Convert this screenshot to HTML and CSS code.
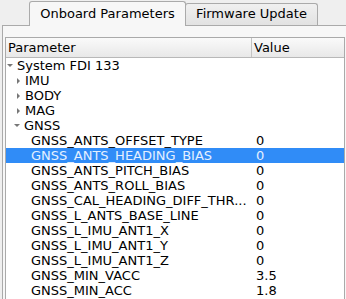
FILE: index.html
```html
<!DOCTYPE html>
<html lang="en">
<head>
    <meta charset="UTF-8">
    <title>Parameters</title>
    <link rel="stylesheet" href="styles.css">
</head>
<body>
    <div class="tabs">
        <div class="tab active">Onboard Parameters</div>
        <div class="tab">Firmware Update</div>
    </div>
    <div class="panel">
        <div class="tree">
            <div class="head">
                <div class="name">Parameter</div>
                <div class="value">Value</div>
            </div>
            <div class="row"><div class="name l0"><span class="arr open"></span>System FDI 133</div><div class="value"></div></div>
            <div class="row"><div class="name l1"><span class="arr"></span>IMU</div><div class="value"></div></div>
            <div class="row"><div class="name l1"><span class="arr"></span>BODY</div><div class="value"></div></div>
            <div class="row"><div class="name l1"><span class="arr"></span>MAG</div><div class="value"></div></div>
            <div class="row"><div class="name l1"><span class="arr open"></span>GNSS</div><div class="value"></div></div>
            <div class="row"><div class="name l2">GNSS_ANTS_OFFSET_TYPE</div><div class="value">0</div></div>
            <div class="row sel"><div class="name l2">GNSS_ANTS_HEADING_BIAS</div><div class="value">0</div></div>
            <div class="row"><div class="name l2">GNSS_ANTS_PITCH_BIAS</div><div class="value">0</div></div>
            <div class="row"><div class="name l2">GNSS_ANTS_ROLL_BIAS</div><div class="value">0</div></div>
            <div class="row"><div class="name l2">GNSS_CAL_HEADING_DIFF_THR...</div><div class="value">0</div></div>
            <div class="row"><div class="name l2">GNSS_L_ANTS_BASE_LINE</div><div class="value">0</div></div>
            <div class="row"><div class="name l2">GNSS_L_IMU_ANT1_X</div><div class="value">0</div></div>
            <div class="row"><div class="name l2">GNSS_L_IMU_ANT1_Y</div><div class="value">0</div></div>
            <div class="row"><div class="name l2">GNSS_L_IMU_ANT1_Z</div><div class="value">0</div></div>
            <div class="row"><div class="name l2">GNSS_MIN_VACC</div><div class="value">3.5</div></div>
            <div class="row"><div class="name l2">GNSS_MIN_ACC</div><div class="value">1.8</div></div>
        </div>
    </div>
</body>
</html>
```

FILE: styles.css
```css
html,body{
    margin: 0;
    padding: 0;
}
body{
    background: #efefef;
    font-family: "DejaVu Sans", sans-serif;
    font-size: 13px;
    color: #000;
    overflow: hidden;
    height: 299px;
}
.tabs{
    display: flex;
    align-items: flex-end;
    padding-left: 29px;
    height: 25px;
}
.tab{
    box-sizing: border-box;
    height: 22px;
    border: 1px solid #aaa;
    border-bottom: none;
    border-radius: 3px 3px 0 0;
    background: linear-gradient(#f0f0f0, #e2e2e2);
    padding: 2px 0 0 0;
    width: 133px;
    text-align: center;
    white-space: nowrap;
}
.tab.active{
    height: 25px;
    width: 157px;
    background: #f7f7f7;
    padding-top: 4px;
    margin-right: -1px;
    margin-bottom: -1px;
    position: relative;
    z-index: 1;
}
.panel{
    margin-left: 2px;
    border: 1px solid #aaa;
    border-right: none;
    background: #f7f7f7;
    height: 400px;
    padding: 11px 0 0 2px;
}
.tree{
    width: 338px;
    border: 1px solid #aaa;
    background: #fff;
    height: 400px;
}
.head{
    display: flex;
    height: 19px;
    line-height: 19px;
    background: linear-gradient(#fafafa, #e8e8e8);
    border-bottom: 1px solid #b8b8b8;
}
.head .name{
    width: 246px;
    padding-left: 2px;
    border-right: 1px solid #c4c4c4;
    box-sizing: border-box;
}
.head .value{
    padding-left: 2px;
}
.row{
    display: flex;
    height: 15px;
    line-height: 15px;
}
.row .name{
    width: 246px;
    box-sizing: border-box;
    white-space: nowrap;
    overflow: hidden;
}
.row .value{
    padding-left: 4px;
}
.l0{
    padding-left: 1px;
}
.l1{
    padding-left: 8px;
}
.l2{
    padding-left: 25px;
}
.arr{
    display: inline-block;
    width: 0;
    height: 0;
    border-top: 3px solid transparent;
    border-bottom: 3px solid transparent;
    border-left: 3px solid #777;
    margin: 0 5px 1px 3px;
    vertical-align: middle;
}
.arr.open{
    border-left: 3px solid transparent;
    border-right: 3px solid transparent;
    border-top: 3px solid #777;
    border-bottom: none;
    margin: 0 4px 2px 0;
}
.sel{
    background: #308cf7;
    color: #e4f0ff;
}
```
